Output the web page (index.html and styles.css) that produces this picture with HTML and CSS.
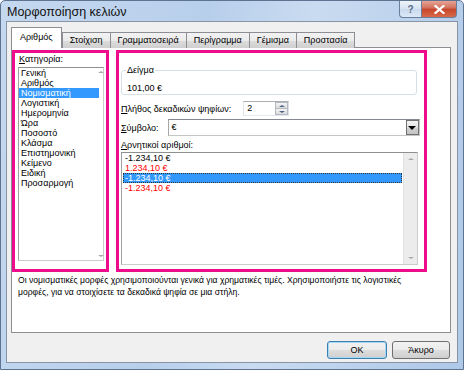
FILE: index.html
```html
<!DOCTYPE html>
<html lang="el">

<head>
    <meta charset="UTF-8">
    <meta name="viewport" content="width=device-width, initial-scale=1.0">
    <title>Μορφοποίηση κελιών</title>
    <link rel="stylesheet" href="styles.css">
</head>

<body>

    <div class="window">
        <div class="titlebar">
            <span class="title">Μορφοποίηση κελιών</span>
            <div class="caption-buttons">
                <span class="cap-btn help">?</span>
                <span class="cap-btn close">
                    <svg width="11" height="9" viewBox="0 0 11 9">
                        <path d="M1.5 1 L9.5 8 M9.5 1 L1.5 8" stroke="#fff" stroke-width="2.2" stroke-linecap="square" />
                    </svg>
                </span>
            </div>
        </div>

        <div class="client">
            <div class="tabs">
                <span class="tab active">Αριθμός</span>
                <span class="tab">Στοίχιση</span>
                <span class="tab">Γραμματοσειρά</span>
                <span class="tab">Περίγραμμα</span>
                <span class="tab">Γέμισμα</span>
                <span class="tab">Προστασία</span>
            </div>

            <div class="panel">
                <div class="columns">
                    <div class="mark col-left">
                        <div class="label cat-label"><u>Κ</u>ατηγορία:</div>
                        <div class="listbox cat-list">
                            <ul class="items">
                                <li>Γενική</li>
                                <li>Αριθμός</li>
                                <li class="selected">Νομισματική</li>
                                <li>Λογιστική</li>
                                <li>Ημερομηνία</li>
                                <li>Ώρα</li>
                                <li>Ποσοστό</li>
                                <li>Κλάσμα</li>
                                <li>Επιστημονική</li>
                                <li>Κείμενο</li>
                                <li>Ειδική</li>
                                <li>Προσαρμογή</li>
                            </ul>
                            <div class="vscroll thin">
                                <span class="arrow up"></span>
                                <span class="arrow down"></span>
                            </div>
                        </div>
                    </div>

                    <div class="mark col-right">
                        <div class="sample">
                            <div class="sample-legend">Δείγμα</div>
                            <div class="sample-value">101,00 €</div>
                        </div>

                        <div class="field-row decimals">
                            <span class="label"><u>Π</u>λήθος δεκαδικών ψηφίων:</span>
                            <div class="spin">
                                <span class="spin-value">2</span>
                                <div class="spin-btns">
                                    <span class="spin-btn"><i class="tri up"></i></span>
                                    <span class="spin-btn"><i class="tri down"></i></span>
                                </div>
                            </div>
                        </div>

                        <div class="field-row symbol">
                            <span class="label"><u>Σ</u>ύμβολο:</span>
                            <div class="select">
                                <span class="select-value">€</span>
                                <span class="drop"><i class="tri down black"></i></span>
                            </div>
                        </div>

                        <div class="label neg-label"><u>Α</u>ρνητικοί αριθμοί:</div>
                        <div class="listbox neg-list">
                            <ul class="items">
                                <li>-1.234,10 €</li>
                                <li class="red">1.234,10 €</li>
                                <li class="selected focus">-1.234,10 €</li>
                                <li class="red">-1.234,10 €</li>
                            </ul>
                            <div class="vscroll wide">
                                <span class="arrow up"></span>
                                <span class="arrow down"></span>
                            </div>
                        </div>
                    </div>
                </div>

                <p class="desc">Οι νομισματικές μορφές χρησιμοποιούνται γενικά για χρηματικές τιμές. Χρησιμοποιήστε τις λογιστικές<br>μορφές, για να στοιχίσετε τα δεκαδικά ψηφία σε μια στήλη.</p>
            </div>

            <div class="actions">
                <button class="btn default">OK</button>
                <button class="btn">Άκυρο</button>
            </div>
        </div>
    </div>

</body>

</html>
```

FILE: styles.css
```css
* {
    box-sizing: border-box;
}

body {
    margin: 0;
    font-family: "Liberation Sans", Arial, sans-serif;
    font-size: 9px;
    color: #000;
    background: #fff;
}

ul {
    margin: 0;
    padding: 0;
    list-style: none;
}

u {
    text-decoration-thickness: 1px;
    text-underline-offset: 1px;
}

/* window frame */

.window {
    width: 464px;
    height: 370px;
    display: flex;
    flex-direction: column;
    border: 1px solid #5e7390;
    border-radius: 5px 5px 0 0;
    background: linear-gradient(100deg, #c4d8ef 0%, #b8cfeb 40%, #c9dbf0 60%, #aec8e8 100%);
}

.titlebar {
    height: 20px;
    display: flex;
    align-items: flex-start;
    padding-left: 6px;
}

.title {
    font-size: 12.5px;
    line-height: 22px;
    color: #111;
}

.caption-buttons {
    margin-left: auto;
    margin-right: 6px;
    display: flex;
}

.cap-btn {
    height: 17px;
    display: flex;
    align-items: center;
    justify-content: center;
    border: 1px solid #6a7f9c;
    border-top: none;
}

.help {
    width: 22px;
    border-radius: 0 0 0 4px;
    border-right: none;
    background: linear-gradient(#edf3fa, #d7e3f2 50%, #c9d9ee 51%, #dce8f6);
    color: #5a6d88;
    font-size: 10px;
    font-weight: bold;
}

.close {
    width: 36px;
    border-radius: 0 0 4px 0;
    background: linear-gradient(#e8a394, #d0705a 45%, #c7452b 50%, #d86a4a);
}

.client {
    flex: 1;
    margin: 0 5px 6px 5px;
    background: #f0f0f0;
    border: 1px solid #8894a6;
    padding: 6px 6px 0 4px;
    display: flex;
    flex-direction: column;
}

/* tabs */

.tabs {
    display: flex;
    align-items: flex-end;
    height: 20px;
    margin-bottom: -1px;
    position: relative;
    z-index: 1;
}

.tab {
    height: 16px;
    line-height: 15px;
    padding: 0 7px;
    border: 1px solid #8c8e94;
    border-bottom: none;
    margin-left: -1px;
    background: linear-gradient(#f2f2f2, #ebebeb 50%, #dddddd 51%, #cfcfcf);
}

.tab.active {
    height: 21px;
    line-height: 19px;
    margin-left: 0;
    padding: 0 8px;
    background: #fff;
    margin-right: 1px;
}

.panel {
    height: 286px;
    background: #fff;
    border: 1px solid #8c8e94;
    padding-top: 2px;
}

.columns {
    display: flex;
    gap: 7px;
}

/* the pink annotation frames */

.mark {
    border: 3px solid #ec0c8c;
    height: 222px;
}

.col-left {
    width: 97px;
    padding: 1px 0 0 3px;
}

.col-right {
    width: 311px;
    padding: 0 0 0 2px;
}

.label {
    line-height: 10px;
    white-space: nowrap;
}

.cat-label {
    padding-left: 1px;
    margin-bottom: 3px;
}

/* list boxes */

.listbox {
    display: flex;
    background: #fff;
    border: 1px solid #a0a0a0;
    border-color: #8e8f8f #cccccc #cccccc #a0a0a0;
}

.listbox .items {
    flex: 1;
}

.items li {
    line-height: 10px;
    height: 10px;
    padding-left: 2px;
    white-space: nowrap;
}

.items li.selected {
    background: #3399ff;
    color: #fff;
}

.items li.red {
    color: #ff0000;
}

.items li.focus {
    outline: 1px dotted #333;
    outline-offset: -1px;
}

.cat-list {
    width: 86px;
    height: 194px;
}

.neg-list {
    width: 297px;
    height: 113px;
    margin-top: 2px;
}

.neg-list .items {
    padding: 0 1px;
}

.vscroll {
    display: flex;
    flex-direction: column;
    justify-content: space-between;
    align-items: center;
    padding: 3px 0;
}

.vscroll.thin {
    width: 4px;
}

.vscroll.wide {
    width: 14px;
    background: #ececec;
    border-left: 1px solid #e2e2e2;
    padding: 5px 0;
}

.arrow {
    width: 0;
    height: 0;
    border-left: 3px solid transparent;
    border-right: 3px solid transparent;
}

.arrow.up {
    border-bottom: 2px solid #a8a8a8;
}

.arrow.down {
    border-top: 2px solid #a8a8a8;
}

/* sample group */

.sample {
    margin-top: 17px;
    width: 296px;
    height: 25px;
    padding: 0 4px;
    border: 1px solid #d5dfe5;
    border-radius: 3px;
}

.sample-legend {
    width: fit-content;
    margin-top: -6px;
    padding: 0 1px;
    line-height: 10px;
    background: #fff;
}

.sample-value {
    line-height: 10px;
    margin-top: 8px;
    padding-left: 1px;
}

/* inputs */

.field-row {
    display: flex;
    align-items: center;
    white-space: nowrap;
}

.decimals {
    margin-top: 6px;
}

.spin {
    margin-left: 12px;
    width: 46px;
    height: 15px;
    display: flex;
    border: 1px solid #abadb3;
    border-color: #abadb3 #dbdfe6 #e3e9ef #e2e3ea;
}

.spin-value {
    flex: 1;
    padding-left: 3px;
    line-height: 13px;
}

.spin-btns {
    width: 13px;
    display: flex;
    flex-direction: column;
}

.spin-btn {
    flex: 1;
    display: flex;
    align-items: center;
    justify-content: center;
    border: 1px solid #b4b8c0;
    background: linear-gradient(#f4f4f4, #dcdcdc);
}

.spin-btn + .spin-btn {
    border-top: none;
}

.tri {
    width: 0;
    height: 0;
    border-left: 3px solid transparent;
    border-right: 3px solid transparent;
}

.tri.up {
    border-bottom: 2px solid #4d6185;
}

.tri.down {
    border-top: 2px solid #4d6185;
}

.tri.black {
    border-left-width: 4px;
    border-right-width: 4px;
    border-top: 4px solid #000;
}

.symbol {
    margin-top: 3px;
}

.select {
    margin-left: 9px;
    width: 252px;
    height: 17px;
    display: flex;
    border: 1px solid #a6a6a6;
    border-color: #828790 #c5c5c5 #c5c5c5 #a6a6a6;
}

.select-value {
    flex: 1;
    padding-left: 3px;
    line-height: 15px;
}

.drop {
    width: 13px;
    display: flex;
    align-items: center;
    justify-content: center;
    border: 1px solid #707070;
    background: linear-gradient(#f2f2f2, #e2e2e2 50%, #d0d0d0 51%, #c5c5c5);
}

.neg-label {
    margin-top: 4px;
}

/* description and buttons */

.desc {
    margin: 2px 0 0 0;
    padding: 0 0 0 6px;
    font-size: 8.6px;
    line-height: 12px;
    white-space: nowrap;
}

.actions {
    display: flex;
    justify-content: flex-end;
    gap: 5px;
    margin-top: 8px;
    padding-right: 1px;
}

.btn {
    font-family: inherit;
    font-size: 9px;
    height: 18px;
    width: 58px;
    padding: 0;
    color: #000;
    border: 1px solid #707070;
    border-radius: 3px;
    background: linear-gradient(#f2f2f2, #ebebeb 50%, #dddddd 51%, #cfcfcf);
}

.btn.default {
    width: 60px;
    border-color: #3c7fb1;
    box-shadow: inset 0 0 0 1px #a4d8f5;
}
```
